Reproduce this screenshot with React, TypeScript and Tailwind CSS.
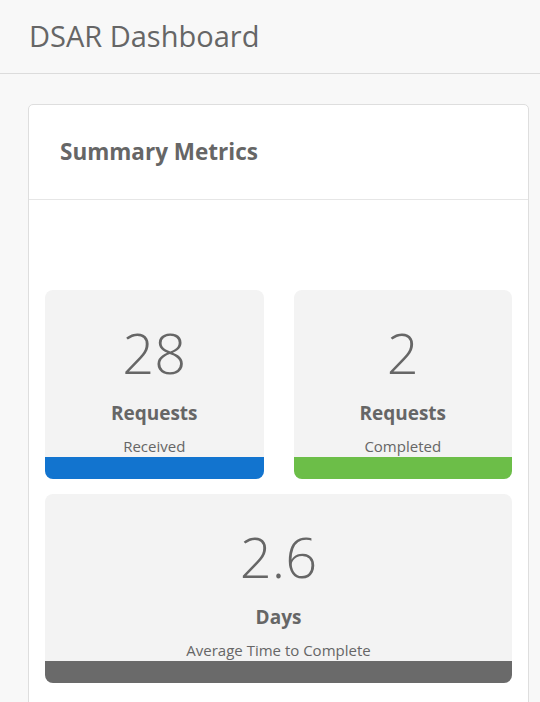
const TILES = [
  { value: '28', label: 'Requests', sub: 'Received', bar: 'bg-[#1274cf]' },
  { value: '2', label: 'Requests', sub: 'Completed', bar: 'bg-[#6cbe48]' },
];

function Tile({ value, label, sub, bar }: { value: string; label: string; sub: string; bar: string }) {
  return (
    <div className="flex flex-col rounded-lg bg-[#f3f3f3] overflow-hidden h-[189px]">
      <div className="flex flex-1 flex-col items-center pt-[22px]">
        <div className="text-[56px] leading-[80px] font-light text-[#666]">{value}</div>
        <div className="mt-[9px] text-[19px] leading-[24px] font-bold text-[#666]">{label}</div>
        <div className="mt-[11px] text-[15px] leading-[20px] text-[#666]">{sub}</div>
      </div>
      <div className={`h-[22px] ${bar}`} />
    </div>
  );
}

export default function App() {
  return (
    <div className="min-h-[702px] bg-[#f8f8f8] font-['Open_Sans',sans-serif]">
      <header className="h-[74px] border-b border-[#dcdcdc] px-[29px] pt-[14px]">
        <h1 className="text-[29px] leading-[44px] text-[#666]">DSAR Dashboard</h1>
      </header>
      <div className="pl-[28px] pr-[11px] pt-[30px]">
        <div className="rounded-[5px] border border-[#dedede] bg-white">
          <div className="h-[95px] border-b border-[#e6e6e6] px-[31px] pt-[31px]">
            <h2 className="text-[22.5px] leading-[32px] font-bold text-[#666]">Summary Metrics</h2>
          </div>
          <div className="px-4 pt-[90px] pb-8">
            <div className="grid grid-cols-2 gap-x-[30px] gap-y-[15px]">
              {TILES.map((t) => (
                <Tile key={t.sub} {...t} />
              ))}
              <div className="col-span-2">
                <Tile value="2.6" label="Days" sub="Average Time to Complete" bar="bg-[#6a6a6a]" />
              </div>
            </div>
          </div>
        </div>
      </div>
    </div>
  );
}
